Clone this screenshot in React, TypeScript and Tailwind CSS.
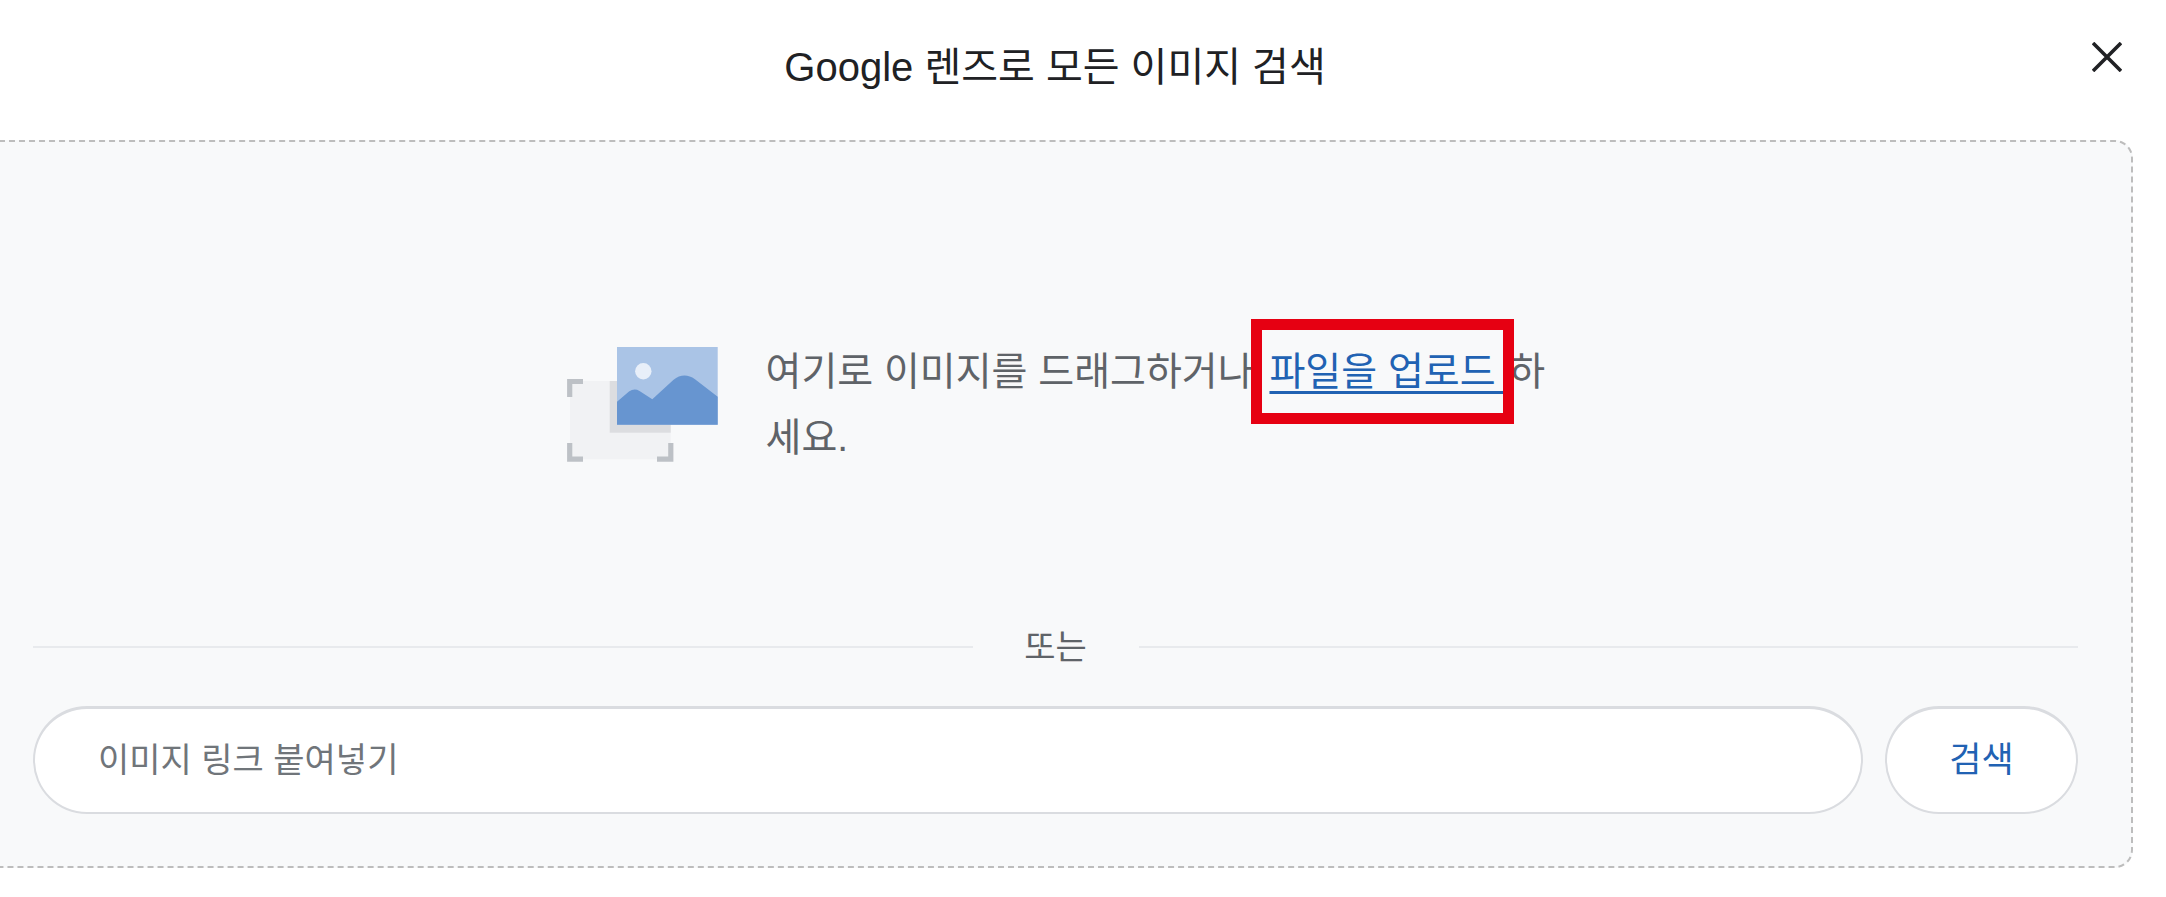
const FONT = "font-['Liberation_Sans','Noto_Sans_CJK_KR',sans-serif]";

function DropIcon() {
  return (
    <svg viewBox="0 0 151 116" className="h-[116px] w-[151px] shrink-0" fill="none">
      <rect x="3" y="34" width="100.7" height="78.3" fill="#f1f2f4" />
      <rect x="42.7" y="34" width="61" height="51.7" fill="#dcdde0" />
      <path d="M2.7 50V34.5H16M2.7 96v16.2H16M90 112.2h13.8V96" stroke="#bdc1c6" strokeWidth="5.2" />
      <rect x="50" y="0" width="100.7" height="77.7" fill="#aac4e6" />
      <circle cx="76.3" cy="24.3" r="8.2" fill="#e8eff9" />
      <path
        d="M50 54.7 62 44.5Q67.3 41 72.5 44L85.3 52.3 106.3 33Q117 24.5 128 32.3L150.7 49.7V77.7H50Z"
        fill="#6795d0"
      />
    </svg>
  );
}

function CloseIcon() {
  return (
    <svg viewBox="0 0 30 30" className="h-[30px] w-[30px]" fill="none">
      <path d="M1 1 29 29M29 1 1 29" stroke="#202124" strokeWidth="3.6" />
    </svg>
  );
}

export default function App() {
  return (
    <div className={`${FONT} flex h-[897px] w-[2166px] flex-col overflow-hidden bg-white`}>
      {/* header */}
      <header className="relative flex h-[140px] shrink-0 justify-center pr-[56px]">
        <h1 className="mt-[44px] h-[46px] text-[40px] leading-[46px] font-normal text-[#202124]">
          Google 렌즈로 모든 이미지 검색
        </h1>
        <button className="absolute top-[42px] left-[2092px]">
          <CloseIcon />
        </button>
      </header>

      {/* drop panel */}
      <section className="-ml-[2px] flex h-[728px] w-[2135px] flex-col rounded-r-[18px] border-2 border-dashed border-[#bdbdbd] bg-[#f8f9fa] pr-[53px] pl-[33px]">
        <div className="mt-[196px] flex items-center justify-center gap-[48px] pl-[21px]">
          <DropIcon />
          <p className="w-[800px] pt-[1px] text-[39px] leading-[66px] text-[#5f6368]">
            여기로 이미지를 드래그하거나{" "}
            <span className="relative ml-[5px] inline-block">
              <a className="text-[#2162b3] underline underline-offset-[6px]">파일을 업로드&nbsp;</a>
              <span className="absolute -top-[20px] -right-[8px] -bottom-[19px] -left-[18px] border-[11px] border-[#e60012]" />
            </span>
            {" "}
            <span className="-ml-[8px]">하세요.</span>
          </p>
        </div>

        <div className="mt-[153px] flex items-center">
          <div className="h-[2px] flex-1 bg-[#e8eaed]" />
          <span className="w-[166px] text-center text-[34px] leading-[46px] text-[#5f6368]">또는</span>
          <div className="h-[2px] flex-1 bg-[#e8eaed]" />
        </div>

        <div className="mt-[36px] flex gap-[22px]">
          <input
            placeholder="이미지 링크 붙여넣기"
            className="h-[108px] min-w-0 flex-1 rounded-full border-2 border-t-[3px] border-[#dadce0] bg-white px-[63px] text-[34px] text-[#202124] outline-none placeholder:text-[#70757a]"
          />
          <button className="h-[108px] w-[193px] rounded-full border-2 border-t-[3px] border-[#dadce0] bg-white text-[35px] text-[#2162b3]">
            검색
          </button>
        </div>
      </section>
    </div>
  );
}
